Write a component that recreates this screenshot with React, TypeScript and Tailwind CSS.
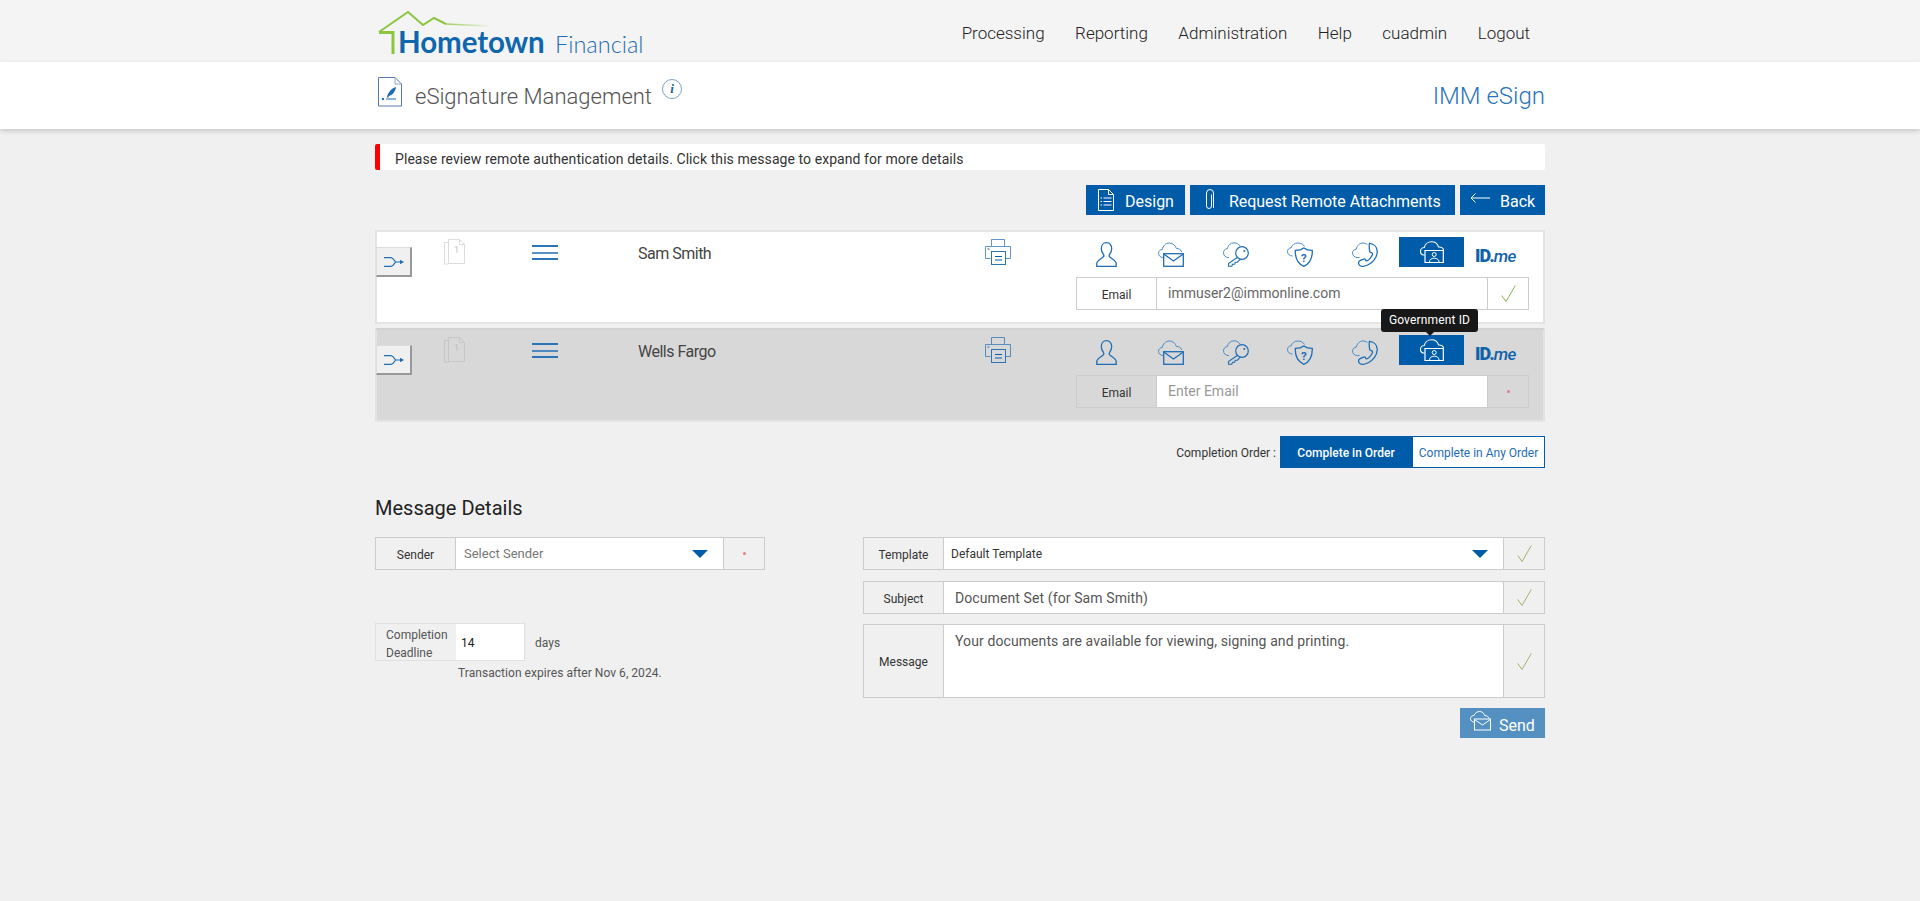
import React from "react";

const B = "#1f6db3";
const L = "#4a8bc8";

function Person() {
  return (
    <svg width="21" height="25" viewBox="0 0 21 25" fill="none" stroke={B} strokeWidth="1.300">
      <path d="M10.500.7C7.300.7 5.300 3.200 5.300 6.600c0 2.400.9 4.400 2.100 5.700.5.600.5 1.900-.1 2.600C6 16.400.8 18.300.8 21.500v2.800h19.400v-2.800c0-3.200-5.200-5.100-6.500-6.600-.6-.7-.6-2-.1-2.600 1.200-1.300 2.100-3.300 2.100-5.700C15.700 3.200 13.700.7 10.500.7z" />
    </svg>
  );
}
function CloudMail() {
  return (
    <svg width="26" height="25" viewBox="0 0 26 25" fill="none">
      <path d="M5 15.500C2.300 15.500.5 13.500.5 11.200.5 9 2.300 7.500 4.300 7.500 4.800 4 7.700 1 11.300 1c3.600 0 6.400 2.500 7 5.500 2.700-.2 4.700 1.300 5.500 3.500" stroke={L} strokeWidth="1" />
      <rect x="5.700" y="11.700" width="19.600" height="12.600" stroke={B} strokeWidth="1.300" />
      <path d="M5.700 12l9.800 7 9.800-7" stroke={B} strokeWidth="1.300" />
    </svg>
  );
}
function CloudKey() {
  return (
    <svg width="26" height="25" viewBox="0 0 26 25" fill="none">
      <path d="M6 15.500H5C2.300 15.500.5 13.300.5 10.800.5 8.300 2.300 6.700 4.300 6.700 4.800 3.400 7.600.8 11 .8c2.700 0 5 1.300 6.300 3.500" stroke={L} strokeWidth="1" />
      <circle cx="19" cy="11" r="6.300" stroke={B} strokeWidth="1.200" />
      <circle cx="21.300" cy="9" r="1" fill={B} />
      <path d="M14.600 15.300L5.500 21.500v2.800h3.300l.7-2h2.200l.5-2.100h2.200l3.200-3.300" stroke={B} strokeWidth="1.100" />
    </svg>
  );
}
function CloudShield() {
  return (
    <svg width="26" height="25" viewBox="0 0 26 25" fill="none">
      <path d="M5.500 14C2.500 14 .5 12 .5 9.500.5 7.300 2.300 5.700 4.300 5.700 4.800 3 7.600 1 11 1c2.700 0 5.200 1.300 6.600 3.500" stroke={L} strokeWidth="1" />
      <path d="M16.800 6c2.200 1.700 5 2.400 8.500 2.400.2 7.800-2 13-8.500 16C10.300 21.400 8 16.200 8.300 8.400c3.500 0 6.300-.7 8.500-2.400z" stroke={B} strokeWidth="1.300" />
      <text x="16.800" y="19.500" textAnchor="middle" fontSize="11.500" fontWeight="700" fill={B} fontFamily="Roboto, sans-serif">?</text>
    </svg>
  );
}
function CloudPhone() {
  return (
    <svg width="26" height="25" viewBox="0 0 26 25" fill="none">
      <path d="M7.500 15.500H5.200C2.500 15.500.5 13.500.5 11 .5 8.800 2.300 7.200 4.300 7.200 4.800 3.800 7.700 1 11 1c1.700 0 3.200.5 4.400 1.400" stroke={L} strokeWidth="1" />
      <path d="M17.500 1.300c4.500.7 8.200 3.800 7.700 9-.5 5.500-4.500 10-9 12.500-3.200 1.700-7.500 2.200-8.800.4-.8-1.200-1-3.200.1-4.100 1-.9 4.700-2.500 5.500-2.100.9.500.3 1.800 1.400 1.800 2.200 0 5.600-4.300 6.200-6.700.3-1.400-2.100-1.300-2.700-2.200-.6-1-.9-7.300-.4-8.600z" stroke={B} strokeWidth="1.300" />
    </svg>
  );
}
function CloudGov() {
  return (
    <svg width="24" height="22" viewBox="0 0 24 22" fill="none" stroke="#fff">
      <path d="M4.500 14H4C1.800 14 .5 12.300.5 10.300.5 8.200 2.300 6.500 4.300 6.500 5 3.200 8 .7 11.500.7c3.500 0 6.300 2.200 7 5.300 2.700-.2 4.800 1.300 5 3" strokeWidth="1.100" />
      <path d="M5 9.500h18.300v12H5z" strokeWidth="1.200" fill="#005ca8" />
      <circle cx="14.200" cy="13.500" r="2" strokeWidth="1" />
      <path d="M9.500 21c0-2.500 2-3.800 4.700-3.800S19 18.500 19 21" strokeWidth="1" />
    </svg>
  );
}
function Check({ strong }: { strong?: boolean }) {
  return (
    <svg width="15" height="17" viewBox="0 0 15 17" fill="none" stroke={strong ? "#86b35a" : "#9db36f"} strokeWidth="1">
      <path d="M.7 10.500l4.300 6L14.300.5" />
    </svg>
  );
}
function Caret() {
  return <div className="w-0 h-0 border-l-[8px] border-r-[8px] border-t-[8px] border-l-transparent border-r-transparent border-t-[#005ca8]" />;
}

function Recipient({ name, dim, gov, children }: { name: string; dim?: boolean; gov?: boolean; children: React.ReactNode }) {
  const docStroke = dim ? "#c6c6c6" : "#dcdcdc";
  return (
    <div className={`flex h-[94px] border-2 ${dim ? "bg-[#d8d8d8] border-[#d2d2d2] border-x-[#e4e4e4] border-b-[#e4e4e4]" : "bg-white border-[#e4e4e4]"}`}>
      <div className="-ml-[1px] mt-[15px] w-[36px] h-[30px] shrink-0 bg-[#f0f0f0] border-t border-l border-[#dddddd] border-r-2 border-b-2 border-r-[#999999] border-b-[#999999] flex items-center justify-center">
        <svg width="20" height="10" viewBox="0 0 20 10" fill="none" stroke="#1f6db3" strokeWidth="1.100">
          <path d="M0 .6h7c2 0 3 2.200 4.500 4.400C10 7.200 9 9.400 7 9.400H0M11.500 5H17" />
          <path d="M16 2.800L20 5l-4 2.200z" fill="#1f6db3" stroke="none" />
        </svg>
      </div>
      <div className="ml-[32px] mt-[7px] w-[21px] h-[26px] shrink-0">
        <svg width="21" height="26" viewBox="0 0 21 26" fill="none" stroke={docStroke}>
          <path d="M4.500 21.500v3.500H.5V3.500h4" />
          <path d="M4.500.5h11l5 5v19h-16z" fill={dim ? "#d8d8d8" : "#fff"} />
          <path d="M15.500.5v5h5" />
          <text x="12.500" y="14" fontSize="9" textAnchor="middle" stroke="none" fill={dim ? "#bdbdbd" : "#c4c4c4"} fontFamily="Roboto, sans-serif">1</text>
        </svg>
      </div>
      <div className="ml-[67px] mt-[13px] w-[26px] flex flex-col gap-[4.500px] shrink-0">
        <div className="h-[2px] bg-[#2a74b8]" />
        <div className="h-[2px] bg-[#2a74b8] opacity-80" />
        <div className="h-[2px] bg-[#2a74b8]" />
      </div>
      <div className="ml-[80px] mt-[12px] w-[347px] text-[16px] leading-[20px] text-[#444444] tracking-[-0.5px] shrink-0">{name}</div>
      <div className="mt-[7px] w-[26px] shrink-0">
        <svg width="26" height="26" viewBox="0 0 26 26" fill="none" stroke="#2a74b8" strokeOpacity=".75">
          <path d="M6.500 7V.5h13V7" />
          <path d="M5.500 19.500H.5v-12h25v12H21" />
          <rect x="6.500" y="12.500" width="14" height="13" strokeOpacity="1" />
          <path d="M10 17.500h7M10 21h7" stroke="#005ca8" strokeOpacity="1" strokeWidth="1.200" />
          <path d="M2.500 10h2" strokeWidth="1.400" />
        </svg>
      </div>
      <div className="ml-[65px] w-[453px] shrink-0 flex flex-col">
        <div className="h-[30px] mt-[5px] flex items-center relative">
          <div className="ml-[20px] w-[21px] h-[25px] mt-[5px]"><Person /></div>
          <div className="ml-[41px] w-[26px] h-[25px] mt-[5px]"><CloudMail /></div>
          <div className="ml-[39px] w-[26px] h-[25px] mt-[5px]"><CloudKey /></div>
          <div className="ml-[38px] w-[26px] h-[25px] mt-[5px]"><CloudShield /></div>
          <div className="ml-[39px] w-[26px] h-[25px] mt-[5px]"><CloudPhone /></div>
          <div className="ml-[21px] w-[65px] h-[30px] bg-[#005ca8] flex items-center justify-center"><CloudGov /></div>
          <div className="ml-[11px] flex items-baseline text-[#0f62a8] leading-none pt-[7px]">
            <span className="text-[18px] font-black tracking-[-0.9px]">ID.</span>
            <span className="text-[17px] italic font-medium tracking-[-0.6px]">me</span>
          </div>
          {gov && (
            <div className="absolute left-[305px] top-[-26px] h-[23px] w-[97px] bg-[#181818] rounded-[3px] text-white text-[12px] tracking-[0.15px] leading-[23px] text-center">
              Government ID
              <div className="absolute left-1/2 -ml-[4px] top-[23px] w-0 h-0 border-l-[4px] border-r-[4px] border-t-[4px] border-l-transparent border-r-transparent border-t-[#181818]" />
            </div>
          )}
        </div>
        <div className="mt-[10px]">{children}</div>
      </div>
    </div>
  );
}

function Field({ label, children, end, labelBg, labelW = 80, h = 33, endBg = "bg-[#f0f0f0]" }: { label: React.ReactNode; children: React.ReactNode; end: React.ReactNode; labelBg?: string; labelW?: number; h?: number; endBg?: string }) {
  return (
    <div className="flex border border-[#cccccc]" style={{ height: h }}>
      <div className={`shrink-0 flex items-center justify-center pt-[2px] text-[12px] text-[#333333] border-r border-[#cccccc] ${labelBg ?? "bg-[#f0f0f0]"}`} style={{ width: labelW }}>{label}</div>
      <div className="flex-1 min-w-0 bg-white">{children}</div>
      <div className={`w-[41px] shrink-0 flex items-center justify-center border-l border-[#cccccc] ${endBg}`}>{end}</div>
    </div>
  );
}
const Dot = () => <div className="w-[3px] h-[3px] rounded-full bg-[#e57a8a]" />;

export default function App() {
  return (
    <div className="min-h-[901px] bg-[#f0f0f0] font-['Roboto',sans-serif] text-[#333333]">
      <div className="h-[62px] bg-[#f4f4f4]">
        <div className="w-[1170px] ml-[375px] flex justify-between">
          <div className="relative h-[62px] w-[300px]">
            <svg className="absolute left-[1px] top-[10px]" width="120" height="46" viewBox="0 0 120 46" fill="none">
              <defs>
                <linearGradient id="roof" x1="60" y1="0" x2="112" y2="0" gradientUnits="userSpaceOnUse">
                  <stop offset="0" stopColor="#8cc63f" />
                  <stop offset="1" stopColor="#8cc63f" stopOpacity=".1" />
                </linearGradient>
              </defs>
              <path d="M3 22L32 2l15 13 11-7 12 6" stroke="#8cc63f" strokeWidth="2" />
              <path d="M70 14l42 2" stroke="url(#roof)" strokeWidth="1.500" />
              <path d="M3 22.500h14V44" stroke="#8cc63f" strokeWidth="3" />
            </svg>
            <span className="absolute left-[23px] top-[26px] font-['Lato',sans-serif] font-bold text-[29.500px] leading-[32px] tracking-[-0.1px] text-[#0e66ad]">Hometown</span>
            <span className="absolute left-[180px] top-[31px] font-['Lato',sans-serif] font-light text-[23.500px] leading-[26px] text-[#1f6db3]">Financial</span>
          </div>
          <div className="flex gap-[30.500px] pr-[15px] pt-[23px] text-[17px] leading-[20px] text-[#222222] font-light">
            <span>Processing</span><span>Reporting</span><span>Administration</span><span>Help</span><span>cuadmin</span><span>Logout</span>
          </div>
        </div>
      </div>
      <div className="h-[67px] bg-white shadow-[0_2px_5px_rgba(0,0,0,0.18)]">
        <div className="w-[1170px] ml-[375px] flex items-start pl-[3px]">
          <svg className="mt-[15px] shrink-0" width="24" height="30" viewBox="0 0 24 30" fill="none">
            <path d="M.5.500H17l6.500 6.500v22H.5z" stroke="#5a78b0" />
            <path d="M17 .5V7h6.500" stroke="#8ea6cc" />
            <path d="M9 20c1-5 5-9 9-10-.5 4-3 8-7 9l-1 2z" fill="#1f6db3" />
            <path d="M8 22h10M4 21l2 2m0-2l-2 2" stroke="#1f6db3" />
          </svg>
          <div className="ml-[13px] mt-[21px] text-[22px] leading-[28px] font-light text-[#555555]">eSignature Management</div>
          <div className="ml-[10px] mt-[17px] w-[20px] h-[20px] rounded-full border border-[#7fa3c4] flex items-center justify-center font-['Liberation_Serif',serif] italic font-bold text-[13px] text-[#1f5f95]">i</div>
          <div className="ml-auto mt-[20px] text-[24px] leading-[28px] font-light text-[#2a74b8]">IMM eSign</div>
        </div>
      </div>
      <div className="w-[1170px] ml-[375px]">
        <div className="mt-[15px] h-[26px] bg-white border-l-[5px] border-[#ff0000] rounded-[2px] pl-[15px] text-[14px] tracking-[0.07px] leading-[30px] text-[#333333]">
          Please review remote authentication details. Click this message to expand for more details
        </div>
        <div className="mt-[15px] flex justify-end gap-[5px] text-white text-[16px] leading-[20px]">
          <div className="h-[30px] w-[99px] bg-[#005ca8] flex items-center pl-[12px] gap-[11px]">
            <svg width="16" height="22" viewBox="0 0 16 22" fill="none" stroke="#fff" className="shrink-0"><path d="M.5.500h10l5 5v16H.5z" /><path d="M10.500.5v5h5" /><path d="M2.500 9h1.500M5.500 9h8M2.500 12.500h1.500M5.500 12.500h8M2.500 16h1.500M5.500 16h8" /></svg>
            <span className="pt-[3px]">Design</span>
          </div>
          <div className="h-[30px] w-[265px] bg-[#005ca8] flex items-center pl-[14px] gap-[14px]">
            <svg width="11" height="23" viewBox="0 0 11 23" fill="none" stroke="#fff" className="shrink-0"><path d="M7.500 5.500V17a2.500 2.500 0 0 1-5 0V4a3.500 3.500 0 0 1 7 0v15" /></svg>
            <span className="whitespace-nowrap pt-[3px] tracking-[-0.05px]">Request Remote Attachments</span>
          </div>
          <div className="h-[30px] w-[85px] bg-[#005ca8] flex items-center pl-[10px] gap-[10px]">
            <svg width="20" height="10" viewBox="0 0 20 10" fill="none" stroke="#fff" className="mb-[5px] shrink-0"><path d="M20 5H1M5.500.5L1 5l4.500 4.500" /></svg>
            <span className="pt-[3px]">Back</span>
          </div>
        </div>
        <div className="mt-[15px] flex flex-col gap-[4px]">
          <Recipient name="Sam Smith">
            <Field label="Email" labelBg="bg-white" endBg="bg-white" end={<Check strong />}>
              <div className="pl-[11px] pr-[10px] text-[14px] leading-[31px] text-[#666666]">immuser2@immonline.com</div>
            </Field>
          </Recipient>
          <Recipient name="Wells Fargo" dim gov>
            <Field label="Email" labelBg="bg-[#d8d8d8]" endBg="bg-[#d8d8d8]" end={<Dot />}>
              <div className="pl-[11px] pr-[10px] text-[14px] leading-[31px] text-[#999999]">Enter Email</div>
            </Field>
          </Recipient>
        </div>
        <div className="mt-[14px] flex justify-end items-center h-[32px] text-[12px]">
          <span className="mr-[4px] pt-[1px] text-[#333333]">Completion Order :</span>
          <div className="w-[132px] h-full pt-[1px] bg-[#005ca8] text-white font-medium flex items-center justify-center">Complete in Order</div>
          <div className="w-[133px] h-full pt-[1px] bg-white border border-[#005ca8] text-[#1f6db3] flex items-center justify-center">Complete in Any Order</div>
        </div>
        <div className="mt-[28px] text-[20px] leading-[24px] text-[#222222]">Message Details</div>
        <div className="mt-[17px] flex justify-between items-start">
          <div className="w-[390px]">
            <Field label="Sender" end={<Dot />}>
              <div className="h-full flex items-center justify-between pl-[8px] pr-[15px] text-[13px] text-[#777777]">Select Sender<Caret /></div>
            </Field>
            <div className="mt-[53px] flex items-start">
              <div className="w-[150px] h-[38px] flex border border-[#e0e0e0]">
                <div className="w-[80px] bg-[#f0f0f0] text-[12px] leading-[18px] text-[#555555] pt-[2px] pl-[10px]">Completion Deadline</div>
                <div className="flex-1 bg-white text-[12px] text-[#222222] leading-[38px] pl-[5px]">14</div>
              </div>
              <div className="ml-[10px] text-[12px] leading-[40px] text-[#555555]">days</div>
            </div>
            <div className="ml-[83px] mt-[1px] text-[12px] tracking-[0.05px] leading-[18px] text-[#555555]">Transaction expires after Nov 6, 2024.</div>
          </div>
          <div className="w-[682px] flex flex-col gap-[11px]">
            <Field label="Template" end={<Check />}>
              <div className="h-full flex items-center justify-between pl-[7px] pr-[15px] text-[12px] text-[#333333]">Default Template<Caret /></div>
            </Field>
            <Field label="Subject" end={<Check />}>
              <div className="pl-[11px] text-[14px] tracking-[0.1px] leading-[32px] text-[#555555]">Document Set (for Sam Smith)</div>
            </Field>
            <div className="-mt-[1px]">
              <Field label="Message" h={74} end={<Check />}>
                <div className="pl-[11px] pt-[5px] text-[14px] tracking-[0.1px] leading-[22px] text-[#555555]">Your documents are available for viewing, signing and printing.</div>
              </Field>
            </div>
            <div className="flex justify-end -mt-[1px]">
              <div className="w-[85px] h-[30px] bg-[#5590c2] text-white text-[16px] flex items-center pl-[10px] gap-[8px]">
                <svg width="21" height="20" viewBox="0 0 21 20" fill="none" stroke="#fff" className="shrink-0 -mt-[4px]">
                  <path d="M4 11C2 11 .5 9.500.5 7.500S2.500 4.500 4 4.500C5 2 7 .5 9.500.5c2.500 0 4.500 1.500 5 4 2 0 4 1 4.500 3" />
                  <rect x="4.500" y="8" width="16" height="11" fill="#5590c2" />
                  <path d="M4.500 8.500l8 5.500 8-5.500" />
                </svg>
                <span className="pt-[6px]">Send</span>
              </div>
            </div>
          </div>
        </div>
      </div>
    </div>
  );
}
